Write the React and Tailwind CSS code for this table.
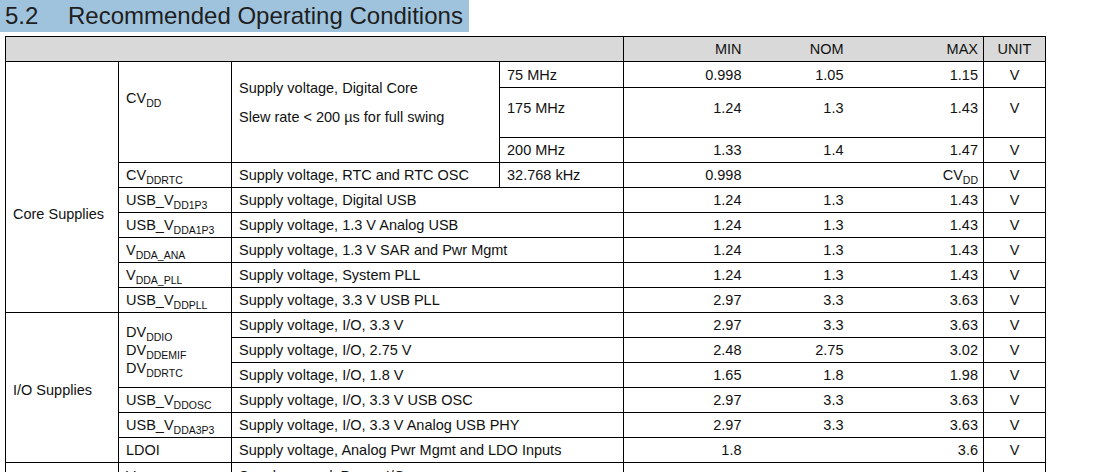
const cell = 'border border-black px-[7px] py-0 align-middle'
const minCell = 'border-y border-l border-black pr-[5px] text-right align-middle'
const nomCell = 'border-y border-black pr-[5px] text-right align-middle'
const maxCell = 'border-y border-r border-black pr-[5px] text-right align-middle'
const unitCell = 'border border-black text-center align-middle'

function Sym({ base, sub }) {
  return (
    <span className="whitespace-nowrap">
      {base}
      <span className="relative top-[4px] text-[10.5px]">{sub}</span>
    </span>
  )
}

const coreRows = [
  ['USB_V', 'DD1P3', 'Supply voltage, Digital USB', '1.24', '1.3', '1.43'],
  ['USB_V', 'DDA1P3', 'Supply voltage, 1.3 V Analog USB', '1.24', '1.3', '1.43'],
  ['V', 'DDA_ANA', 'Supply voltage, 1.3 V SAR and Pwr Mgmt', '1.24', '1.3', '1.43'],
  ['V', 'DDA_PLL', 'Supply voltage, System PLL', '1.24', '1.3', '1.43'],
  ['USB_V', 'DDPLL', 'Supply voltage, 3.3 V USB PLL', '2.97', '3.3', '3.63'],
]

const ioRows = [
  ['USB_V', 'DDOSC', 'Supply voltage, I/O, 3.3 V USB OSC', '2.97', '3.3', '3.63'],
  ['USB_V', 'DDA3P3', 'Supply voltage, I/O, 3.3 V Analog USB PHY', '2.97', '3.3', '3.63'],
  ['LDOI', '', 'Supply voltage, Analog Pwr Mgmt and LDO Inputs', '1.8', '', '3.6'],
]

function Values({ min, nom, max, top, unit = 'V' }) {
  const extra = top ? ' align-top pt-[10px]' : ''
  return (
    <>
      <td className={minCell + extra}>{min}</td>
      <td className={nomCell + extra}>{nom}</td>
      <td className={maxCell + extra}>{max}</td>
      <td className={unitCell + extra}>{unit}</td>
    </>
  )
}

export default function App() {
  return (
    <div className="min-h-screen bg-white font-['Liberation_Sans',Arial,sans-serif] text-[#111]">
      <div className="flex h-[32px] w-[469px] items-center bg-[#9fc3dd] pl-[5px] text-[24px] leading-none text-[#1e1e1e]">
        <span className="w-[63px]">5.2</span>
        <span>Recommended Operating Conditions</span>
      </div>
      <table className="ml-[5px] mt-[4px] w-[1041px] table-fixed border-collapse text-[14.5px] leading-[20px]">
        <colgroup>
          <col className="w-[113px]" />
          <col className="w-[113px]" />
          <col className="w-[268px]" />
          <col className="w-[124px]" />
          <col className="w-[123px]" />
          <col className="w-[102px]" />
          <col className="w-[135px]" />
          <col className="w-[62px]" />
        </colgroup>
        <thead>
          <tr className="h-[25px] bg-[#d9d9d9]">
            <td colSpan={4} className={cell}></td>
            <td className={minCell}>MIN</td>
            <td className={nomCell}>NOM</td>
            <td className={maxCell}>MAX</td>
            <td className={unitCell}>UNIT</td>
          </tr>
        </thead>
        <tbody>
          <tr className="h-[26px]">
            <td rowSpan={9} className={cell + ' !align-top pt-[142px]'}>Core Supplies</td>
            <td rowSpan={3} className={cell + ' !align-top pt-[26px]'}>
              <Sym base="CV" sub="DD" />
            </td>
            <td rowSpan={3} className={cell + ' !align-top pt-[16px]'}>
              <p>Supply voltage, Digital Core</p>
              <p className="mt-[9px]">Slew rate &lt; 200 µs for full swing</p>
            </td>
            <td className={cell}>75 MHz</td>
            <Values min="0.998" nom="1.05" max="1.15" />
          </tr>
          <tr className="h-[50px]">
            <td className={cell + ' !align-top pt-[10px]'}>175 MHz</td>
            <Values min="1.24" nom="1.3" max="1.43" top />
          </tr>
          <tr className="h-[25px]">
            <td className={cell}>200 MHz</td>
            <Values min="1.33" nom="1.4" max="1.47" />
          </tr>
          <tr className="h-[25px]">
            <td className={cell}>
              <Sym base="CV" sub="DDRTC" />
            </td>
            <td className={cell}>Supply voltage, RTC and RTC OSC</td>
            <td className={cell}>32.768 kHz</td>
            <Values min="0.998" nom="" max={<Sym base="CV" sub="DD" />} />
          </tr>
          {coreRows.map(([base, sub, desc, min, nom, max]) => (
            <tr key={base + sub} className="h-[25px]">
              <td className={cell}>
                <Sym base={base} sub={sub} />
              </td>
              <td colSpan={2} className={cell}>{desc}</td>
              <Values min={min} nom={nom} max={max} />
            </tr>
          ))}
          <tr className="h-[25px]">
            <td rowSpan={6} className={cell + ' pt-[4px]'}>I/O Supplies</td>
            <td rowSpan={3} className={cell + ' leading-[17px] pt-[2px]'}>
              <div>
                <Sym base="DV" sub="DDIO" />
              </div>
              <div>
                <Sym base="DV" sub="DDEMIF" />
              </div>
              <div>
                <Sym base="DV" sub="DDRTC" />
              </div>
            </td>
            <td colSpan={2} className={cell}>Supply voltage, I/O, 3.3 V</td>
            <Values min="2.97" nom="3.3" max="3.63" />
          </tr>
          <tr className="h-[25px]">
            <td colSpan={2} className={cell}>Supply voltage, I/O, 2.75 V</td>
            <Values min="2.48" nom="2.75" max="3.02" />
          </tr>
          <tr className="h-[25px]">
            <td colSpan={2} className={cell}>Supply voltage, I/O, 1.8 V</td>
            <Values min="1.65" nom="1.8" max="1.98" />
          </tr>
          {ioRows.map(([base, sub, desc, min, nom, max]) => (
            <tr key={base + sub} className="h-[25px]">
              <td className={cell}>
                <Sym base={base} sub={sub} />
              </td>
              <td colSpan={2} className={cell}>{desc}</td>
              <Values min={min} nom={nom} max={max} />
            </tr>
          ))}
          <tr className="h-[40px]">
            <td className={cell}></td>
            <td className={cell + ' !align-top pt-[3px]'}>
              <Sym base="V" sub="SS" />
            </td>
            <td colSpan={2} className={cell + ' !align-top pt-[3px]'}>Supply ground, Power I/O</td>
            <Values min="" nom="" max="" unit="" />
          </tr>
        </tbody>
      </table>
    </div>
  )
}
